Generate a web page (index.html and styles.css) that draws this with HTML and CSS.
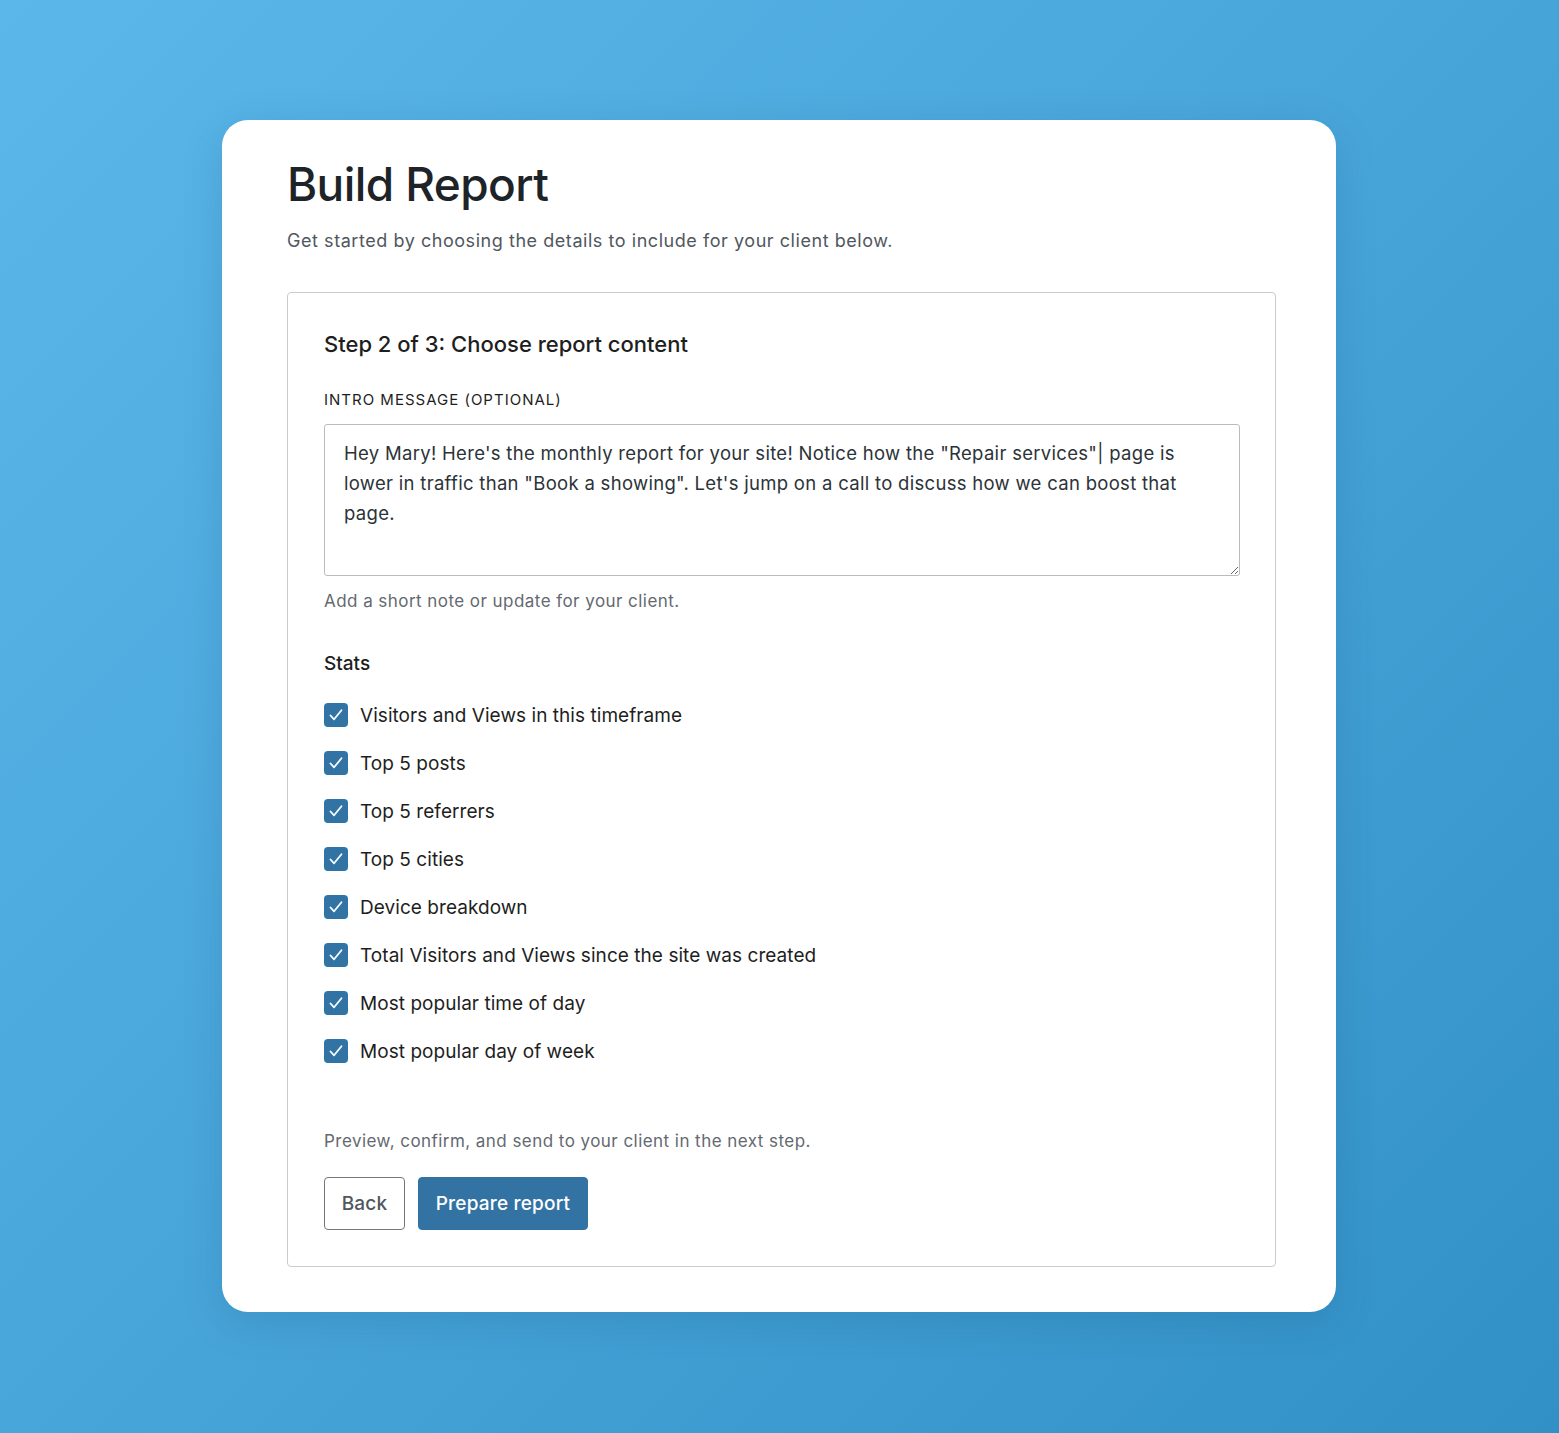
FILE: index.html
```html
<!DOCTYPE html>
<html lang="en">
<head>
<meta charset="utf-8">
<title>Build Report</title>
<link rel="stylesheet" href="styles.css">
</head>
<body>
<main class="card">
  <h1 class="title">Build Report</h1>
  <p class="subtitle">Get started by choosing the details to include for your client below.</p>
  <section class="panel">
    <h2 class="step">Step 2 of 3: Choose report content</h2>
    <label class="field-label" for="intro">INTRO MESSAGE (OPTIONAL)</label>
    <textarea id="intro" class="intro">Hey Mary! Here's the monthly report for your site! Notice how the "Repair services"| page is lower in traffic than "Book a showing". Let's jump on a call to discuss how we can boost that page.</textarea>
    <p class="help">Add a short note or update for your client.</p>
    <h3 class="stats">Stats</h3>
    <ul class="checks">
      <li class="check"><span class="box"><svg viewBox="0 0 24 24"><path d="M6.5 12.5l3.6 3.8 7.4-9"/></svg></span>Visitors and Views in this timeframe</li>
      <li class="check"><span class="box"><svg viewBox="0 0 24 24"><path d="M6.5 12.5l3.6 3.8 7.4-9"/></svg></span>Top 5 posts</li>
      <li class="check"><span class="box"><svg viewBox="0 0 24 24"><path d="M6.5 12.5l3.6 3.8 7.4-9"/></svg></span>Top 5 referrers</li>
      <li class="check"><span class="box"><svg viewBox="0 0 24 24"><path d="M6.5 12.5l3.6 3.8 7.4-9"/></svg></span>Top 5 cities</li>
      <li class="check"><span class="box"><svg viewBox="0 0 24 24"><path d="M6.5 12.5l3.6 3.8 7.4-9"/></svg></span>Device breakdown</li>
      <li class="check"><span class="box"><svg viewBox="0 0 24 24"><path d="M6.5 12.5l3.6 3.8 7.4-9"/></svg></span>Total Visitors and Views since the site was created</li>
      <li class="check"><span class="box"><svg viewBox="0 0 24 24"><path d="M6.5 12.5l3.6 3.8 7.4-9"/></svg></span>Most popular time of day</li>
      <li class="check"><span class="box"><svg viewBox="0 0 24 24"><path d="M6.5 12.5l3.6 3.8 7.4-9"/></svg></span>Most popular day of week</li>
    </ul>
    <p class="footer-note">Preview, confirm, and send to your client in the next step.</p>
    <div class="actions">
      <button class="btn btn-secondary" type="button">Back</button>
      <button class="btn btn-primary" type="button">Prepare report</button>
    </div>
  </section>
</main>
</body>
</html>
```
FILE: styles.css
```css
* { box-sizing: border-box; }
html, body { margin: 0; padding: 0; }
body {
  width: 1559px;
  height: 1433px;
  overflow: hidden;
  background: linear-gradient(135deg, #5bb7e9 0%, #48a5da 50%, #3190c6 100%);
  font-family: Inter, "Noto Sans", "Liberation Sans", sans-serif;
  color: #1e1e1e;
  padding: 120px 0 0 222px;
}
.card {
  width: 1114px;
  background: #fff;
  border-radius: 26px;
  padding: 36px 60px 45px 65px;
  box-shadow: 0 10px 40px rgba(20, 70, 110, 0.18);
  display: flex;
  flex-direction: column;
}
.title {
  margin: 0;
  font-size: 46px;
  line-height: 56px;
  font-weight: 500;
  letter-spacing: -0.6px;
  color: #1e2327;
}
.subtitle {
  margin: 16px 0 0;
  font-size: 18px;
  line-height: 26px;
  letter-spacing: 0.55px;
  color: #50575e;
}
.panel {
  margin-top: 38px;
  border: 1px solid #c9ccd0;
  border-radius: 4px;
  padding: 36px 35px 36px 36px;
  display: flex;
  flex-direction: column;
  align-items: flex-start;
}
.step {
  margin: 0;
  font-size: 22px;
  line-height: 30px;
  font-weight: 500;
  color: #1e1e1e;
}
.field-label {
  margin-top: 31px;
  font-size: 15px;
  line-height: 20px;
  font-weight: 400;
  letter-spacing: 1px;
  color: #1e1e1e;
}
.intro {
  margin-top: 14px;
  width: 100%;
  height: 152px;
  border: 1px solid #b8bcc0;
  border-radius: 3px;
  padding: 13px 19px;
  font-family: inherit;
  font-size: 18.5px;
  line-height: 30px;
  letter-spacing: 0.3px;
  color: #2c3338;
  resize: vertical;
  background: #fff;
}
.help {
  margin: 13px 0 0;
  font-size: 17px;
  line-height: 24px;
  letter-spacing: 0.45px;
  color: #646970;
}
.stats {
  margin: 38px 0 0;
  font-size: 19px;
  line-height: 26px;
  font-weight: 500;
  color: #1e1e1e;
}
.checks {
  list-style: none;
  margin: 26px 0 0;
  padding: 0;
  display: flex;
  flex-direction: column;
  gap: 24px;
}
.check {
  display: flex;
  align-items: center;
  gap: 12px;
  height: 24px;
  font-size: 19px;
  letter-spacing: 0.05px;
  color: #1e1e1e;
}
.box {
  width: 24px;
  height: 24px;
  border-radius: 4px;
  background: #3273a6;
  display: flex;
  align-items: center;
  justify-content: center;
  flex: none;
}
.box svg {
  width: 24px;
  height: 24px;
  fill: none;
  stroke: #fff;
  stroke-width: 1.8;
  stroke-linecap: round;
  stroke-linejoin: round;
}
.footer-note {
  margin: 66px 0 0;
  font-size: 17px;
  line-height: 24px;
  letter-spacing: 0.45px;
  color: #646970;
}
.actions {
  margin-top: 24px;
  display: flex;
  gap: 13px;
}
.btn {
  height: 53px;
  border-radius: 4px;
  font-family: inherit;
  font-size: 19px;
  font-weight: 500;
  letter-spacing: 0.2px;
  padding: 0 10px;
  cursor: pointer;
}
.btn-secondary {
  width: 81px;
  background: #fff;
  border: 1.5px solid #72777c;
  color: #50575e;
}
.btn-primary {
  width: 170px;
  background: #3373a4;
  border: 1px solid #3373a4;
  color: #fff;
}
```
